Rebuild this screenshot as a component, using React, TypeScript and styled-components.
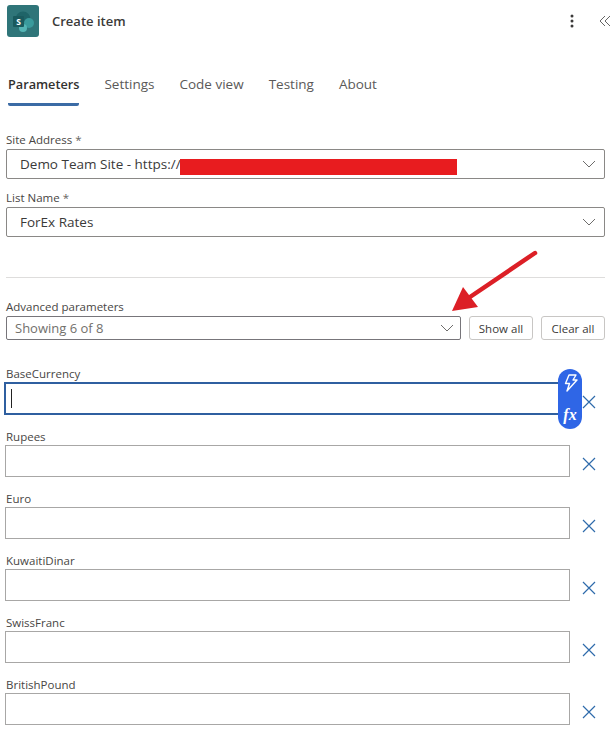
import React from "react";
import styled, { createGlobalStyle } from "styled-components";

const GlobalStyle = createGlobalStyle`
  html, body {
    margin: 0;
    padding: 0;
    background: #fff;
    font-family: "Open Sans", "Noto Sans", sans-serif;
    color: #323130;
  }
`;

const Page = styled.div`
  position: relative;
  width: 611px;
  height: 733px;
  overflow: hidden;
  background: #fff;
`;

const Header = styled.header`
  display: flex;
  align-items: center;
  height: 32px;
  padding: 5px 0 0 7px;
`;

const Title = styled.h1`
  flex: 1;
  margin: 0 0 0 13px;
  font-size: 13px;
  font-weight: 600;
  color: #3b3a39;
`;

const IconButton = styled.span<{ $width: number; $gap?: number }>`
  display: flex;
  align-items: center;
  justify-content: center;
  width: ${(p) => p.$width}px;
  height: 22px;
  margin-left: ${(p) => p.$gap ?? 0}px;
`;

const Tabs = styled.nav`
  display: flex;
  gap: 25px;
  margin: 30px 0 0 8px;
  height: 39px;
`;

const Tab = styled.div<{ $active?: boolean }>`
  box-sizing: border-box;
  height: 39px;
  padding-top: 7px;
  font-size: ${(p) => (p.$active ? "12.7px" : "13.5px")};
  line-height: 20px;
  font-weight: ${(p) => (p.$active ? 600 : 400)};
  color: ${(p) => (p.$active ? "#323130" : "#5a5958")};
  ${(p) => p.$active && "border-bottom: 3px solid #3b6ba5; border-radius: 0 0 2px 2px;"}
`;

const Main = styled.main`
  padding: 25px 6px 0;
`;

const Field = styled.div<{ $gap?: number }>`
  margin-top: ${(p) => p.$gap ?? 0}px;
`;

const Label = styled.label`
  display: block;
  height: 18px;
  font-size: 11.5px;
  line-height: 18px;
  color: #484644;
`;

const Star = styled.span`
  color: #66645f;
`;

const Select = styled.div`
  display: flex;
  align-items: center;
  justify-content: space-between;
  box-sizing: border-box;
  height: 30px;
  padding: 0 8px 0 13px;
  border: 1px solid #8a8886;
  border-radius: 2px;
  font-size: 13.5px;
  color: #3b3a39;
`;

const Divider = styled.hr`
  height: 1px;
  margin: 40px 0 20px;
  border: 0;
  background: #dedddc;
`;

const AdvancedRow = styled.div`
  display: flex;
  gap: 8px;
`;

const SmallSelect = styled(Select)`
  flex: 1;
  height: 24px;
  padding: 0 6px 0 8px;
  color: #72706c;
  font-size: 13px;
  border-color: #77757a;
`;

const Button = styled.button<{ $width: number }>`
  width: ${(p) => p.$width}px;
  height: 24px;
  padding: 0;
  background: #fff;
  border: 1px solid #c8c6c4;
  border-radius: 3px;
  font-family: inherit;
  font-size: 11.5px;
  color: #3b3a39;
`;

const ParamList = styled.div`
  display: flex;
  flex-direction: column;
  gap: 14px;
  margin: 26px 0 0 -1px;
`;

const ParamLabel = styled.label`
  display: block;
  height: 16px;
  padding-left: 1px;
  font-size: 11.5px;
  line-height: 15px;
  color: #484644;
`;

const ParamRow = styled.div`
  display: flex;
  align-items: center;
`;

const TextBox = styled.div`
  box-sizing: border-box;
  width: 565px;
  height: 32px;
  border: 1px solid #a8a7a6;
`;

const FocusedBox = styled.div`
  position: relative;
  box-sizing: border-box;
  width: 556px;
  height: 33px;
  margin: 0 10px 0 -1px;
  border: 2px solid #2f5fa0;
`;

const Caret = styled.span`
  position: absolute;
  left: 5px;
  top: 5px;
  width: 1px;
  height: 19px;
  background: #222;
`;

const Remove = styled.span`
  display: flex;
  margin: 6px 0 0 12px;
  color: #2f6bab;
`;

const TokenPicker = styled.div`
  position: absolute;
  right: -24px;
  top: -15px;
  display: flex;
  flex-direction: column;
  align-items: center;
  justify-content: space-between;
  box-sizing: border-box;
  width: 24px;
  height: 60px;
  padding: 5px 0 5px;
  border-radius: 12px;
  background: #2f66e6;
  color: #fff;
`;

const Fx = styled.span`
  font-family: "Liberation Serif", serif;
  font-style: italic;
  font-weight: 700;
  font-size: 16px;
  line-height: 18px;
`;

const Redaction = styled.div`
  position: absolute;
  left: 180px;
  top: 159px;
  width: 277px;
  height: 16px;
  background: #e81c1f;
`;

const Arrow = styled.svg`
  position: absolute;
  left: 445px;
  top: 245px;
`;

const Chevron = () => (
  <svg width="14" height="8" viewBox="0 0 14 8" fill="none" stroke="#6e6d6c" strokeWidth="1">
    <path d="M1 1l6 6 6-6" />
  </svg>
);

const Cross = () => (
  <svg width="14" height="14" viewBox="0 0 14 14" fill="none" stroke="currentColor" strokeWidth="1.2">
    <path d="M1 1l12 12M13 1L1 13" />
  </svg>
);

const SharePointIcon = () => (
  <svg width="32" height="32" viewBox="0 0 32 32">
    <rect width="32" height="32" rx="3" fill="#2f7579" />
    <circle cx="16" cy="14" r="7.5" fill="#1f6468" />
    <circle cx="22" cy="18" r="5" fill="#3a9a9c" />
    <circle cx="16" cy="23" r="4" fill="#54b5b5" />
    <rect x="6" y="11" width="11" height="11" rx="1" fill="#1a5a5e" />
    <text x="11.5" y="20" textAnchor="middle" fontSize="8.5" fontWeight="700" fill="#fff" fontFamily="Open Sans, sans-serif">
      S
    </text>
  </svg>
);

const params = ["Rupees", "Euro", "KuwaitiDinar", "SwissFranc", "BritishPound"];

export default function App() {
  return (
    <Page>
      <GlobalStyle />
      <Header>
        <SharePointIcon />
        <Title>Create item</Title>
        <IconButton $width={22}>
          <svg width="4" height="14" viewBox="0 0 4 14" fill="#3b3a39">
            <circle cx="2" cy="2" r="1.5" />
            <circle cx="2" cy="7" r="1.5" />
            <circle cx="2" cy="12" r="1.5" />
          </svg>
        </IconButton>
        <IconButton $width={12} $gap={16}>
          <svg width="12" height="12" viewBox="0 0 12 12" fill="none" stroke="#666" strokeWidth="1">
            <path d="M6 1L1 6l5 5M11 1L6 6l5 5" />
          </svg>
        </IconButton>
      </Header>
      <Tabs>
        <Tab $active>Parameters</Tab>
        <Tab>Settings</Tab>
        <Tab>Code view</Tab>
        <Tab>Testing</Tab>
        <Tab>About</Tab>
      </Tabs>
      <Main>
        <Field>
          <Label>
            Site Address <Star>*</Star>
          </Label>
          <Select>
            <span>Demo Team Site - https://</span>
            <Chevron />
          </Select>
        </Field>
        <Field $gap={10}>
          <Label>
            List Name <Star>*</Star>
          </Label>
          <Select>
            <span>ForEx Rates</span>
            <Chevron />
          </Select>
        </Field>
        <Divider />
        <Field>
          <Label>Advanced parameters</Label>
          <AdvancedRow>
            <SmallSelect>
              <span>Showing 6 of 8</span>
              <Chevron />
            </SmallSelect>
            <Button $width={64}>Show all</Button>
            <Button $width={64}>Clear all</Button>
          </AdvancedRow>
        </Field>
        <ParamList>
          <div>
            <ParamLabel>BaseCurrency</ParamLabel>
            <ParamRow>
              <FocusedBox>
                <Caret />
                <TokenPicker>
                  <svg width="15" height="18" viewBox="0 0 15 18" fill="none" stroke="#fff" strokeWidth="1.4" strokeLinejoin="round">
                    <path d="M6 1h7l-3 5h4L4 17l2.5-7.5H2.5z" />
                  </svg>
                  <Fx>fx</Fx>
                </TokenPicker>
              </FocusedBox>
              <Remove>
                <Cross />
              </Remove>
            </ParamRow>
          </div>
          {params.map((name) => (
            <div key={name}>
              <ParamLabel>{name}</ParamLabel>
              <ParamRow>
                <TextBox />
                <Remove>
                  <Cross />
                </Remove>
              </ParamRow>
            </div>
          ))}
        </ParamList>
      </Main>
      <Redaction />
      <Arrow width="100" height="75" viewBox="0 0 100 75">
        <path d="M90 8L25 52" stroke="#dc1f26" strokeWidth="4.5" strokeLinecap="round" />
        <path d="M7 66l11-24 15 20z" fill="#dc1f26" />
      </Arrow>
    </Page>
  );
}
